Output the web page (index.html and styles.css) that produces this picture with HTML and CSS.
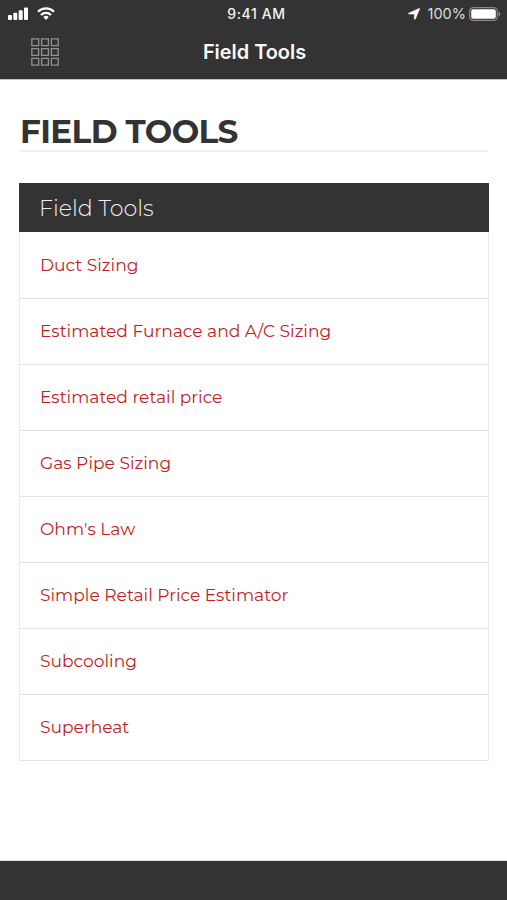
FILE: index.html
```html
<!DOCTYPE html>
<html lang="en">
<head>
<meta charset="utf-8">
<title>Field Tools</title>
<link rel="stylesheet" href="styles.css">
</head>
<body>
<div class="app">
  <header class="top">
    <div class="status">
      <div class="status-left">
        <svg class="signal" width="20" height="13" viewBox="0 0 20 13" fill="#fff"><rect x="0" y="8" width="4" height="5" rx="1"/><rect x="5.3" y="5.8" width="4" height="7.2" rx="1"/><rect x="10.7" y="3.2" width="4" height="9.8" rx="1"/><rect x="16" y="0.5" width="4" height="12.5" rx="1"/></svg>
        <svg class="wifi" width="18" height="13" viewBox="0 0 18 13" fill="none" stroke="#fff" stroke-width="2.3"><path d="M1 4.7A11.4 11.4 0 0 1 17 4.7"/><path d="M4 8A7.1 7.1 0 0 1 14 8"/><path d="M9 13L6.3 10.1A4 4 0 0 1 11.7 10.1Z" fill="#fff" stroke="none"/></svg>
      </div>
      <div class="time">9:41 AM</div>
      <div class="status-right">
        <svg class="location" width="12" height="12" viewBox="0 0 12 12" fill="#fff" stroke="#fff" stroke-width=".5"><path d="M11.2.4Q11.9.2 11.6.9L7.4 11Q6.7 12.2 6.3 10.9V6.1H1.1Q-.3 5.7.9 5Z"/></svg>
        <span class="percent">100%</span>
        <svg class="battery" width="32" height="14" viewBox="0 0 32 14"><rect x=".7" y=".7" width="27.6" height="12.6" rx="3.6" fill="none" stroke="#888" stroke-width="1.2"/><rect x="2.2" y="2.3" width="24.6" height="9.4" rx="2" fill="#fff"/><path d="M29.6 4.7Q31.3 5.6 31.3 7T29.6 9.3Z" fill="#999"/></svg>
      </div>
    </div>
    <nav class="nav">
      <svg class="grid-icon" width="28" height="28" viewBox="0 0 28 28" fill="none" stroke="#929292" stroke-width="1.3"><path d="M.8.8h6.8v6.8H.8zM10.6.8h6.8v6.8h-6.8zM20.4.8h6.8v6.8h-6.8zM.8 10.6h6.8v6.8H.8zM10.6 10.6h6.8v6.8h-6.8zM20.4 10.6h6.8v6.8h-6.8zM.8 20.4h6.8v6.8H.8zM10.6 20.4h6.8v6.8h-6.8zM20.4 20.4h6.8v6.8h-6.8z"/></svg>
      <div class="nav-title">Field Tools</div>
    </nav>
  </header>
  <main class="content">
    <h1 class="title">FIELD TOOLS</h1>
    <section class="panel">
      <h2 class="panel-head">Field Tools</h2>
      <ul class="list">
        <li><a>Duct Sizing</a></li>
        <li><a>Estimated Furnace and A/C Sizing</a></li>
        <li><a>Estimated retail price</a></li>
        <li><a>Gas Pipe Sizing</a></li>
        <li><a>Ohm's Law</a></li>
        <li><a>Simple Retail Price Estimator</a></li>
        <li><a>Subcooling</a></li>
        <li><a>Superheat</a></li>
      </ul>
    </section>
  </main>
  <footer class="bottom"></footer>
</div>
</body>
</html>
```
FILE: styles.css
```css
* { box-sizing: border-box; }
body { margin: 0; background: #fff; font-family: Montserrat, Inter, sans-serif; }
.app { height: 900px; display: flex; flex-direction: column; overflow: hidden; }
.top { height: 79px; flex: none; background: #333; color: #fff; box-shadow: 0 1px 0 #c4c4c4; font-family: Inter, sans-serif; }
.status { height: 26px; display: grid; grid-template-columns: 1fr auto 1fr; align-items: center; padding: 0 6px 0 8px; }
.status-left { display: flex; align-items: center; gap: 9px; }
.status-right { display: flex; align-items: center; justify-content: flex-end; }
.time { font-size: 14px; font-weight: 500; letter-spacing: .6px; line-height: 26px; color: #f2f2f2; padding: 1px 0 0 4px; }
.percent { font-size: 14.5px; line-height: 26px; color: #ddd; margin: 1px 3px 0 8px; }
.nav { height: 52px; display: grid; grid-template-columns: 1fr auto 1fr; align-items: center; padding: 0 30px; }
.nav-title { font-size: 19.9px; font-weight: 600; line-height: 52px; color: #fafafa; padding-left: 2px; }
.grid-icon { margin-left: 1px; }
.content { flex: 1; padding: 34px 19px 0 20px; }
.title { height: 39px; margin: 0 0 31px; border-bottom: 2px solid #efefef; font-size: 32.6px; font-weight: 700; letter-spacing: -.6px; line-height: 37px; color: #333; }
.panel { margin: 0 -1px; }
.panel-head { height: 49px; margin: 0; padding-left: 20px; background: #333; color: #eee; font-size: 22.2px; font-weight: 300; line-height: 51px; }
.list { list-style: none; margin: 0; padding: 0; border: solid #e9e9e9; border-width: 0 1px; }
.list li { height: 66px; padding-left: 20px; border-bottom: 1px solid #e2e2e2; font-size: 17.1px; line-height: 63px; color: #bd1f24; }
.list li:first-child { height: 67px; line-height: 65px; }
.bottom { height: 39px; flex: none; background: #333; box-shadow: 0 -1px 0 #ddd; }
```
